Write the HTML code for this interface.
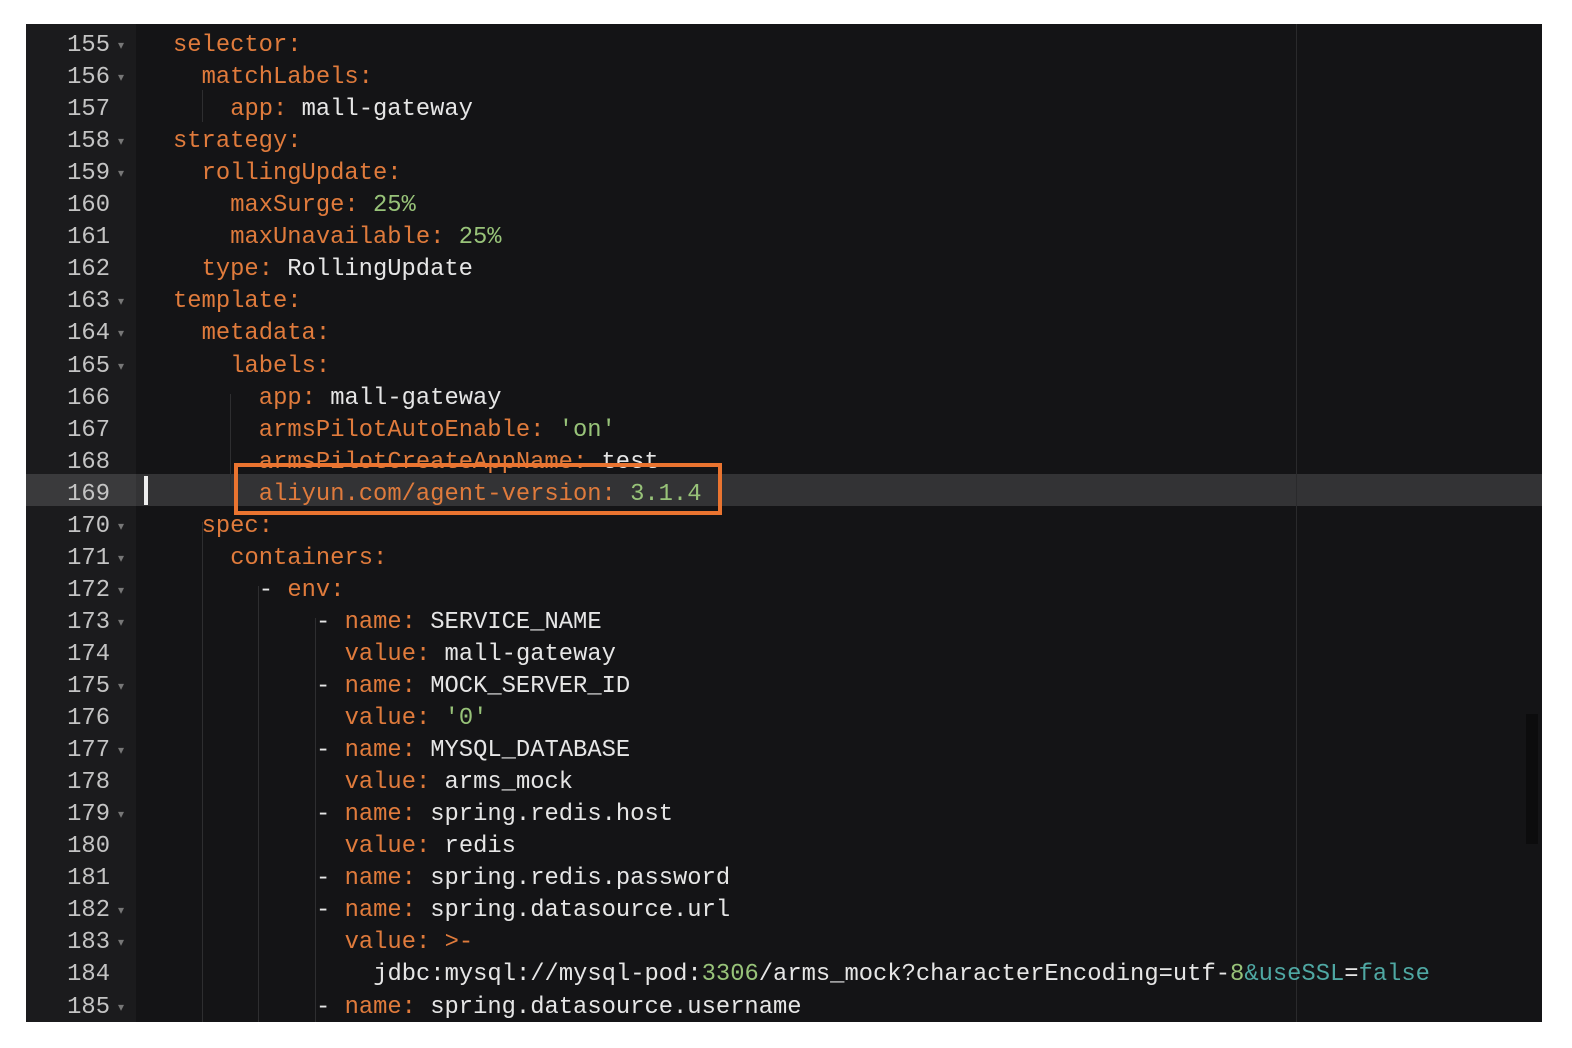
<!DOCTYPE html>
<html><head><meta charset="utf-8"><style>
html,body{margin:0;padding:0;background:#fff;width:1572px;height:1048px;overflow:hidden}
#ed{position:absolute;left:26px;top:24px;width:1516px;height:998px;background:#141416;overflow:hidden}
#gut{position:absolute;left:0;top:0;width:110px;height:998px;background:#1b1b1d}
.ln{position:absolute;left:0;width:84px;text-align:right;color:#c4c4c4;font:23.8px/31.9px "Liberation Mono",monospace}
.fa{position:absolute;left:92px;color:#777;font:12px/31.9px "Liberation Sans",sans-serif}
.cl{position:absolute;left:118.4px;white-space:pre;color:#e6e6e6;font:23.8px/31.9px "Liberation Mono",monospace}
.k{color:#e07b3c}.g{color:#98c379}.t{color:#4fa8a3}
.hl{position:absolute;left:0;width:1516px;height:32px;background:#333335}
.guide{position:absolute;width:1px;background:#2e2e30}
</style></head><body>
<div id="ed">
<div id="gut"></div>
<div class="hl" style="top:450px"></div>
<div class="hl" style="top:450px;width:110px;background:#3a3a3c"></div>
<div style="position:absolute;left:1270px;top:0;width:1px;height:998px;background:#2a2a2c"></div>
<div style="position:absolute;left:1500px;top:690px;width:12px;height:130px;background:#0c0c0d"></div>
<div class="guide" style="left:176px;top:66px;height:32px"></div>
<div class="guide" style="left:204px;top:370px;height:96px"></div>
<div class="guide" style="left:232px;top:562px;height:436px"></div>
<div class="guide" style="left:289px;top:594px;height:404px"></div>
<div class="guide" style="left:176px;top:498px;height:500px"></div>
<div style="position:absolute;left:118px;top:452px;width:4px;height:29px;background:#eee"></div>
<div id="lines"></div>
<div style="position:absolute;left:208px;top:439px;width:480px;height:44px;border:4px solid #ea7430"></div>
</div>
<script>
var L=[
[2,'<span class="k">selector:</span>',1],
[3,'<span class="k">matchLabels:</span>',1],
[4,'<span class="k">app:</span> mall-gateway',0],
[2,'<span class="k">strategy:</span>',1],
[3,'<span class="k">rollingUpdate:</span>',1],
[4,'<span class="k">maxSurge:</span> <span class="g">25%</span>',0],
[4,'<span class="k">maxUnavailable:</span> <span class="g">25%</span>',0],
[3,'<span class="k">type:</span> RollingUpdate',0],
[2,'<span class="k">template:</span>',1],
[3,'<span class="k">metadata:</span>',1],
[4,'<span class="k">labels:</span>',1],
[5,'<span class="k">app:</span> mall-gateway',0],
[5,'<span class="k">armsPilotAutoEnable:</span> <span class="g">\'on\'</span>',0],
[5,'<span class="k">armsPilotCreateAppName:</span> test',0],
[5,'<span class="k">aliyun.com/agent-version:</span> <span class="g">3.1.4</span>',0],
[3,'<span class="k">spec:</span>',1],
[4,'<span class="k">containers:</span>',1],
[5,'- <span class="k">env:</span>',1],
[6,'- <span class="k">name:</span> SERVICE_NAME',1],
[7,'<span class="k">value:</span> mall-gateway',0],
[6,'- <span class="k">name:</span> MOCK_SERVER_ID',1],
[7,'<span class="k">value:</span> <span class="g">\'0\'</span>',0],
[6,'- <span class="k">name:</span> MYSQL_DATABASE',1],
[7,'<span class="k">value:</span> arms_mock',0],
[6,'- <span class="k">name:</span> spring.redis.host',1],
[7,'<span class="k">value:</span> redis',0],
[6,'- <span class="k">name:</span> spring.redis.password',0],
[6,'- <span class="k">name:</span> spring.datasource.url',1],
[7,'<span class="k">value:</span> <span class="k">&gt;-</span>',1],
[8,'jdbc:mysql://mysql-pod:<span class="g">3306</span>/arms_mock?characterEncoding=utf-<span class="g">8</span><span class="t">&amp;useSSL</span>=<span class="t">false</span>',0],
[6,'- <span class="k">name:</span> spring.datasource.username',1]
];
var cols=[0,0,2,4,6,8,12,14,16];
var h='';
for(var i=0;i<L.length;i++){
 var y=6+i*32.05, l=L[i];
 h+='<div class="ln" style="top:'+y+'px">'+(155+i)+'</div>';
 if(l[2])h+='<div class="fa" style="top:'+y+'px">&#9662;</div>';
 h+='<div class="cl" style="top:'+y+'px;left:'+(118.4+cols[l[0]]*14.3)+'px">'+l[1]+'</div>';
}
document.getElementById('lines').innerHTML=h;
</script>
</body></html>
